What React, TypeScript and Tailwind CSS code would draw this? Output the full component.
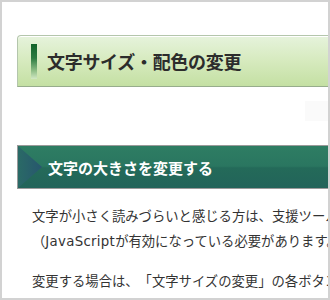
const App = () => {
  return (
    <div className="w-[330px] h-[300px] overflow-hidden border-2 border-[#d2d2d2] bg-white font-['Noto_Sans_CJK_JP',sans-serif] text-[#333]">
      <div className="w-[700px] pl-[15px] pt-[33px]">
        {/* page title */}
        <div className="h-[52px] rounded-tl-[4px] border border-[#b4c6ac] border-b-[#97ad8c] bg-[linear-gradient(#e6f3dc,#d6eabe_50%,#c4e0a3)] shadow-[inset_0_1px_0_#ffffff] flex items-center pl-[13px]">
          <div className="w-[6px] h-[35px] bg-[linear-gradient(#12632a,#2c7a40_40%,#8cbc84_75%,#d2e8c4)]" />
          <h1 className="ml-[10px] text-[18px] font-bold tracking-[-0.3px] leading-none text-[#2c2c2c]">
            文字サイズ・配色の変更
          </h1>
        </div>

        <div className="flex justify-end w-[311px] mt-[14px]">
          <div className="w-[23px] h-[20px] bg-[#fafafa]" />
        </div>

        {/* section heading */}
        <div className="mt-[24px] h-[44px] border border-[#9a9a9a] bg-[linear-gradient(#2e7d63,#2a7660_48%,#246a59_52%,#22645a)] flex items-center relative">
          <svg className="absolute left-0 top-0" width="26" height="42" viewBox="0 0 26 42">
            <defs>
              <linearGradient id="tri" x1="0" y1="0" x2="1" y2="0">
                <stop offset="0" stopColor="#2a6a66" />
                <stop offset="1" stopColor="#27566e" />
              </linearGradient>
            </defs>
            <polygon points="0,0 24,21 0,42" fill="url(#tri)" />
          </svg>
          <h2 className="ml-[30px] text-[15px] font-bold leading-none text-white">
            文字の大きさを変更する
          </h2>
        </div>

        {/* body */}
        <div className="pl-[15px] pt-[14px] text-[13.33px] leading-[25px] whitespace-nowrap [text-spacing-trim:space-all]">
          <p>
            文字が小さく読みづらいと感じる方は、支援ツールを使って文字の大きさを変更できます。
            <br />
            （<span className="font-['DejaVu_Sans',sans-serif] tracking-[0.3px]">JavaScript</span>が有効になっている必要があります。）
          </p>
          <p className="mt-[14px]">
            変更する場合は、「文字サイズの変更」の各ボタンを押してください。
          </p>
        </div>
      </div>
    </div>
  );
};

export default App;
